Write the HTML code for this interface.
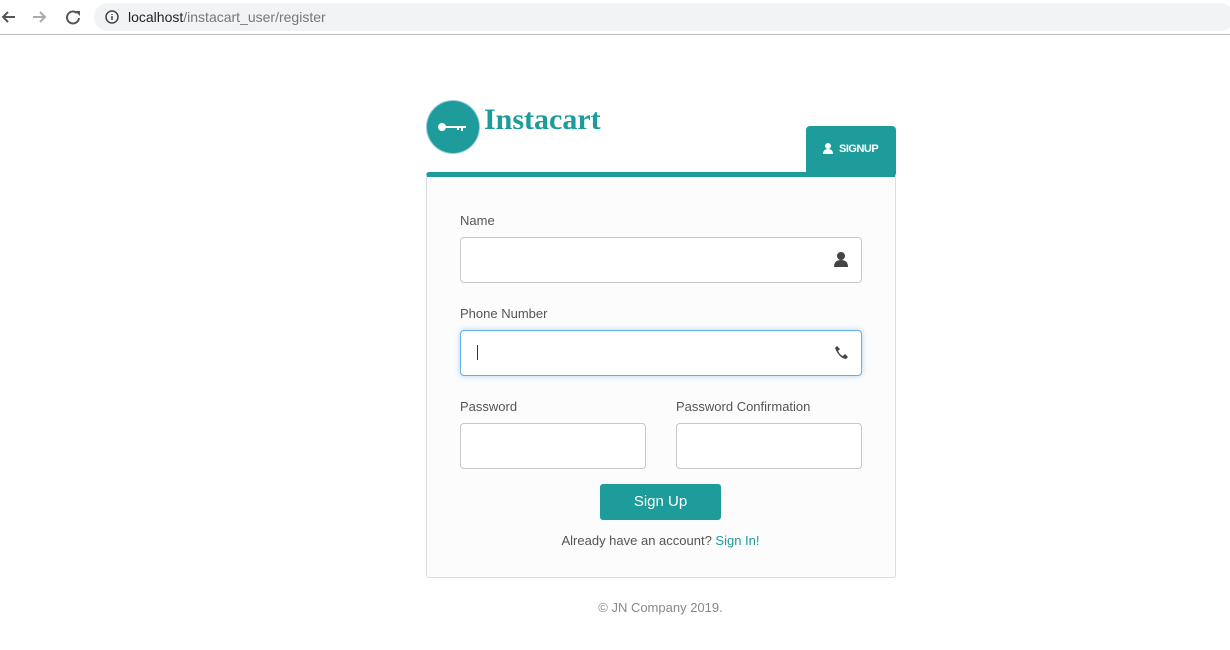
<!DOCTYPE html>
<html><head><style>
body{margin:0;width:1230px;height:650px;background:#fff;font-family:"Liberation Sans",sans-serif;position:relative;overflow:hidden}
.bar{position:absolute;left:0;top:0;width:1230px;height:34px;background:#fff;border-bottom:1px solid #bbb}
.url{position:absolute;left:94px;top:3px;width:1140px;height:28px;background:#f1f3f4;border-radius:14px}
.url span{position:absolute;left:34px;top:6px;font-size:14px;color:#222}
.card{position:absolute;left:426px;top:172px;width:470px;height:406px;border:1px solid #ddd;border-top:5px solid #1e9b9b;box-sizing:border-box;background:#fcfcfc;border-radius:3px}
.lbl{position:absolute;font-size:13px;color:#555}
.in{position:absolute;height:46px;border:1px solid #c8c8c8;border-radius:4px;background:#fff;box-sizing:border-box}
.tab{position:absolute;left:806px;top:126px;width:90px;height:48px;background:#1e9b9b;border-radius:4px 4px 0 0;color:#fff;font-size:11px;font-weight:bold}
</style></head><body>
<div class="bar">
<svg style="position:absolute;left:0;top:8px" width="90" height="18"><path d="M15 9H3M8 4L3 9l5 5" stroke="#555" stroke-width="2" fill="none"/><path d="M33 9h12M40 4l5 5-5 5" stroke="#aaa" stroke-width="2" fill="none"/><path d="M77 5a6 6 0 1 0 2 5" stroke="#555" stroke-width="2" fill="none"/><path d="M75 3h5v5z" fill="#555"/></svg>
<div class="url"><svg style="position:absolute;left:11px;top:7px" width="14" height="14"><circle cx="7" cy="7" r="6" stroke="#444" stroke-width="1.5" fill="none"/><path d="M7 6v4M7 4v1" stroke="#444" stroke-width="1.5"/></svg><span>localhost<span style="position:static;color:#777">/instacart_user/register</span></span></div>
</div>
<div style="position:absolute;left:427px;top:101px;width:52px;height:52px;border-radius:50%;background:#1e9b9b;box-shadow:0 0 0 1px #9cd"></div>
<svg style="position:absolute;left:437px;top:120px" width="32" height="14"><circle cx="5" cy="7" r="4" fill="#fff"/><path d="M8 6h21v2h-3v3h-2v-3h-2v2h-2v-2H8z" fill="#fff"/></svg>
<div style="position:absolute;left:484px;top:103px;font-family:'Liberation Serif',serif;font-weight:bold;font-size:30px;color:#1e9b9b">Instacart</div>
<div class="tab"><svg style="position:absolute;left:17px;top:17px" width="10" height="11"><circle cx="5" cy="3" r="3" fill="#fff"/><path d="M0 11q0-5 5-5t5 5z" fill="#fff"/></svg><span style="position:absolute;left:33px;top:17px;letter-spacing:-.5px">SIGNUP</span></div>
<div class="card"></div>
<div class="lbl" style="left:460px;top:213px">Name</div>
<div class="in" style="left:460px;top:237px;width:402px"><svg style="position:absolute;right:13px;top:14px" width="14" height="15"><circle cx="7" cy="4" r="4" fill="#444"/><path d="M0 15q0-7 7-7t7 7z" fill="#444"/></svg></div>
<div class="lbl" style="left:460px;top:306px">Phone Number</div>
<div class="in" style="left:460px;top:330px;width:402px;border-color:#66afe9;box-shadow:0 0 6px rgba(102,175,233,.5)"><div style="position:absolute;left:16px;top:14px;width:1px;height:15px;background:#333"></div><svg style="position:absolute;right:13px;top:14px" width="14" height="14"><path d="M3 1l3 3-2 2q2 4 5 5l2-2 3 3-2 2Q5 13 1 3z" fill="#444"/></svg></div>
<div class="lbl" style="left:460px;top:399px">Password</div>
<div class="lbl" style="left:676px;top:399px">Password Confirmation</div>
<div class="in" style="left:460px;top:423px;width:186px"></div>
<div class="in" style="left:676px;top:423px;width:186px"></div>
<div style="position:absolute;left:600px;top:484px;width:121px;height:36px;background:#1e9b9b;border-radius:3px;color:#fff;font-size:15px;text-align:center;line-height:36px">Sign Up</div>
<div style="position:absolute;left:0;width:1321px;top:533px;text-align:center;font-size:13px;color:#555">Already have an account? <span style="color:#1e9b9b">Sign In!</span></div>
<div style="position:absolute;left:0;width:1321px;top:600px;text-align:center;font-size:13px;color:#888">© JN Company 2019.</div>
</body></html>
